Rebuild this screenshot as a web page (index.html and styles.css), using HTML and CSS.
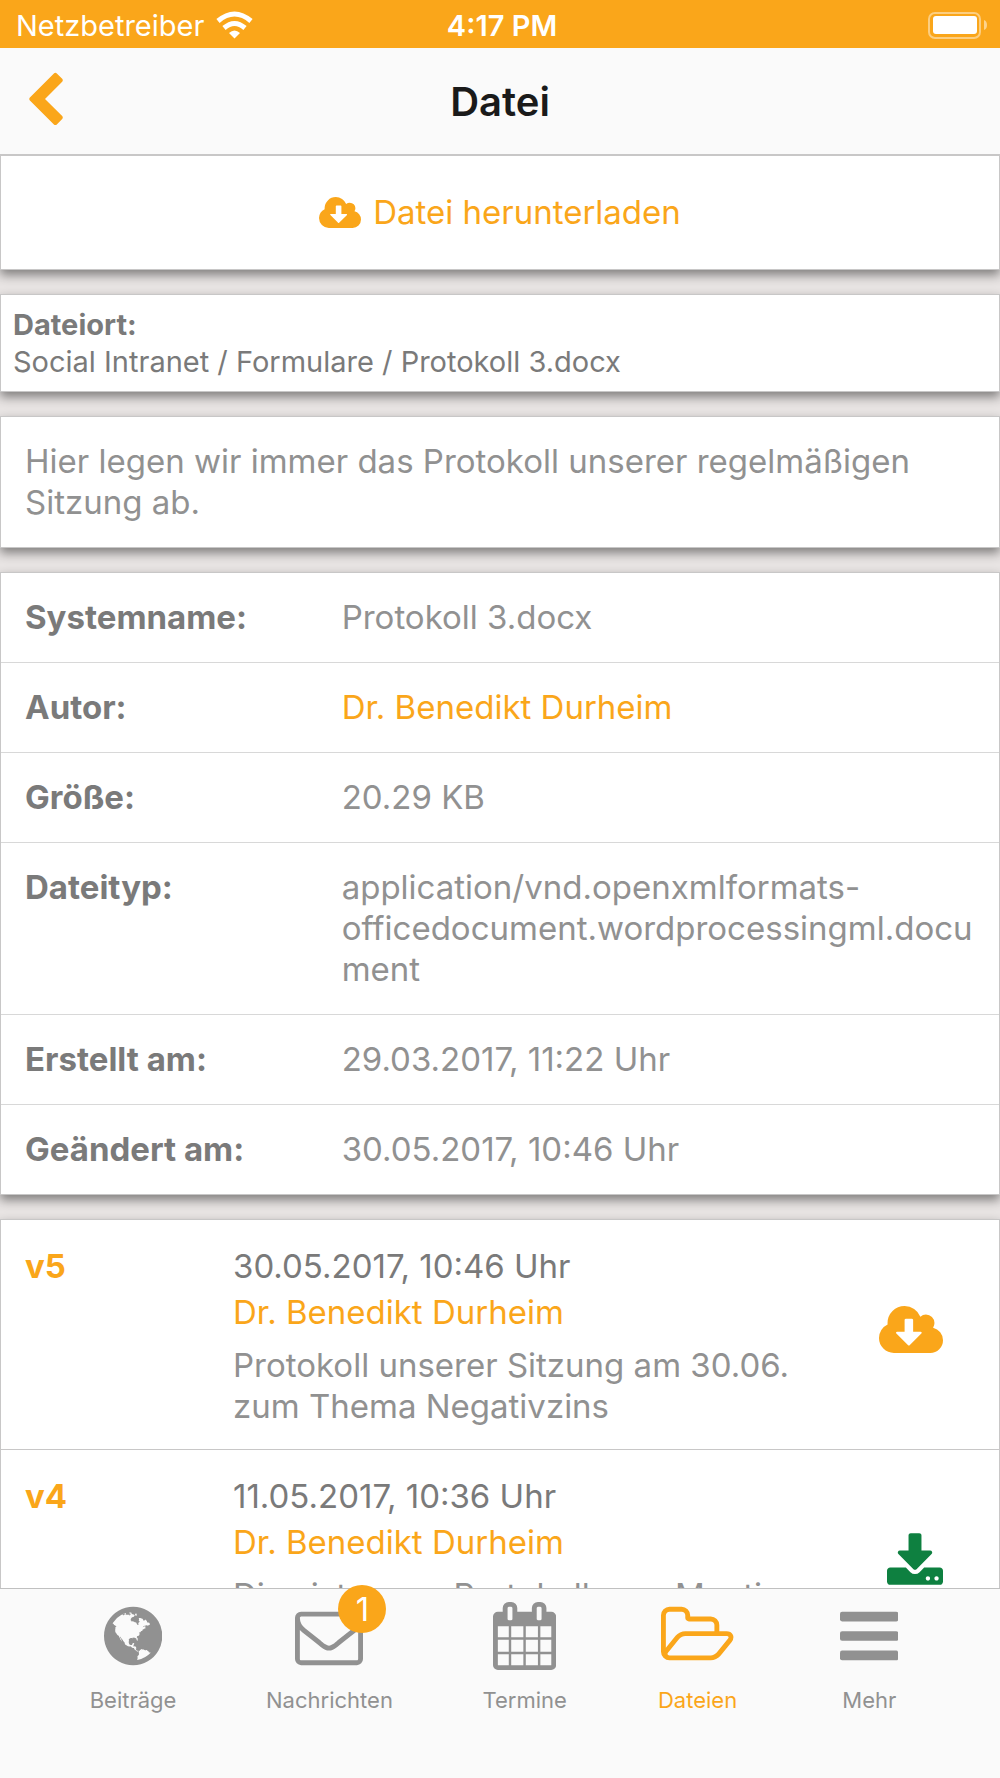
FILE: index.html
```
<!DOCTYPE html>
<html lang="de">
<head>
    <meta charset="UTF-8">
    <meta name="viewport" content="width=device-width, initial-scale=1.0">
    <title>Datei</title>
    <link rel="stylesheet" href="styles.css">
</head>
<body>

<div class="statusbar">
    <div class="carrier">
        <span>Netzbetreiber</span>
        <svg class="wifi" viewBox="0 0 37 28" fill="none" stroke="#fff" stroke-width="5">
            <path class="wave" d="M2 10Q18.500 -4 35 10"/>
            <path class="wave" d="M8 17Q18.500 8 29 17"/>
            <path d="M18.500 27.500L13 22Q18.500 17 24 22Z" fill="#fff" stroke="none"/>
        </svg>
    </div>
    <div class="time">4:17 PM</div>
    <svg class="battery" viewBox="0 0 60 27">
        <rect x="1" y="1" width="51" height="25" rx="6" fill="none" stroke="#fff" stroke-width="2" opacity=".45"/>
        <rect x="5" y="4" width="44" height="18" rx="3" fill="#fff"/>
        <path d="M56 8q3 1 3 5t-3 5z" fill="#fff" opacity=".5"/>
    </svg>
</div>

<header class="header">
    <button type="button" class="back" aria-label="Zurück">
        <svg viewBox="0 0 1792 1792"><path d="M1427 301l-531 531 531 531q19 19 19 45t-19 45l-166 166q-19 19-45 19t-45-19l-742-742q-19-19-19-45t19-45l742-742q19-19 45-19t45 19l166 166q19 19 19 45t-19 45z"/></svg>
    </button>
    <h1>Datei</h1>
</header>

<main class="content">
    <section class="card">
        <button type="button" class="download">
            <svg viewBox="0 128 1920 1408"><path d="M1280 928q0-14-9-23t-23-9h-224v-352q0-13-9.500-22.500t-22.500-9.500h-192q-13 0-22.500 9.500t-9.500 22.500v352h-224q-13 0-22.500 9.500t-9.500 22.500q0 14 9 23l352 352q9 9 23 9t23-9l351-351q10-12 10-24zm640 224q0 159-112.500 271.500t-271.500 112.500h-1088q-185 0-316.500-131.500t-131.500-316.500q0-130 70-240t188-165q-2-30-2-43 0-212 150-362t362-150q156 0 285.500 87t188.500 231q71-62 166-62 106 0 181 75t75 181q0 76-41 138 130 31 213.500 135.500t83.500 238.500z"/></svg>
            Datei herunterladen
        </button>
    </section>

    <section class="card location">
        <strong>Dateiort:</strong>
        <div>Social Intranet / Formulare / Protokoll 3.docx</div>
    </section>

    <section class="card description">
        Hier legen wir immer das Protokoll unserer regelmäßigen Sitzung ab.
    </section>

    <dl class="card details">
        <div class="row">
            <dt>Systemname:</dt>
            <dd>Protokoll 3.docx</dd>
        </div>
        <div class="row">
            <dt>Autor:</dt>
            <dd><a href="#">Dr. Benedikt Durheim</a></dd>
        </div>
        <div class="row">
            <dt>Größe:</dt>
            <dd>20.29 KB</dd>
        </div>
        <div class="row">
            <dt>Dateityp:</dt>
            <dd>application/vnd.openxmlformats-officedocument.wordprocessingml.document</dd>
        </div>
        <div class="row">
            <dt>Erstellt am:</dt>
            <dd>29.03.2017, 11:22 Uhr</dd>
        </div>
        <div class="row">
            <dt>Geändert am:</dt>
            <dd>30.05.2017, 10:46 Uhr</dd>
        </div>
    </dl>

    <section class="card versions">
        <article class="version">
            <div class="number">v5</div>
            <div class="info">
                <div class="date">30.05.2017, 10:46 Uhr</div>
                <a href="#">Dr. Benedikt Durheim</a>
                <p>Protokoll unserer Sitzung am 30.06. zum Thema Negativzins</p>
            </div>
            <button type="button" class="fetch" aria-label="v5 herunterladen">
                <svg class="cloud" viewBox="0 128 1920 1408"><path d="M1280 928q0-14-9-23t-23-9h-224v-352q0-13-9.500-22.500t-22.500-9.500h-192q-13 0-22.500 9.500t-9.500 22.500v352h-224q-13 0-22.500 9.500t-9.500 22.500q0 14 9 23l352 352q9 9 23 9t23-9l351-351q10-12 10-24zm640 224q0 159-112.500 271.500t-271.500 112.500h-1088q-185 0-316.500-131.500t-131.500-316.500q0-130 70-240t188-165q-2-30-2-43 0-212 150-362t362-150q156 0 285.500 87t188.500 231q71-62 166-62 106 0 181 75t75 181q0 76-41 138 130 31 213.500 135.500t83.500 238.500z"/></svg>
            </button>
        </article>
        <article class="version">
            <div class="number">v4</div>
            <div class="info">
                <div class="date">11.05.2017, 10:36 Uhr</div>
                <a href="#">Dr. Benedikt Durheim</a>
                <p>Dies ist unser Protokoll zum Meeting am 11.05.2017</p>
            </div>
            <button type="button" class="fetch" aria-label="v4 öffnen">
                <svg class="saved" viewBox="64 0 1664 1536"><path d="M1344 1344q0-26-19-45t-45-19-45 19-19 45 19 45 45 19 45-19 19-45zm256 0q0-26-19-45t-45-19-45 19-19 45 19 45 45 19 45-19 19-45zm128-224v320q0 40-28 68t-68 28h-1472q-40 0-68-28t-28-68v-320q0-40 28-68t68-28h465l135 136q58 56 136 56t136-56l136-136h464q40 0 68 28t28 68zm-325-569q17 41-14 70l-448 448q-18 19-45 19t-45-19l-448-448q-31-29-14-70 17-39 59-39h256v-448q0-26 19-45t45-19h256q26 0 45 19t19 45v448h256q42 0 59 39z"/></svg>
            </button>
        </article>
    </section>
</main>

<nav class="tabbar">
    <a href="#" class="tab">
        <span class="icon">
            <svg viewBox="128 0 1536 1792"><path d="M896 128q209 0 385.500 103t279.500 279.500 103 385.500-103 385.500-279.500 279.500-385.500 103-385.500-103-279.500-279.500-103-385.500 103-385.500 279.500-279.500 385.500-103zm274 521q-2 1-9.500 9.500t-13.500 9.500q2 0 4.500-5t5-11 3.500-7q6-7 22-15 14-6 52-12 34-8 51 11-2-2 9.500-13t14.500-12q3-2 15-4.500t15-7.500l2-22q-12 1-17.500-7t-6.500-21q0 2-6 8 0-7-4.500-8t-11.500 1-9 1q-10-3-15-7.500t-8-16.500-4-15q-2-5-9.500-11t-9.500-10q-1-2-2.500-5.500t-3-6.500-4-5.500-5.500-2.500-7 5-7.500 10-4.500 5q-3-2-6-1.500t-4.500 1-4.500 3-5 3.500q-3 2-8.500 3t-8.500 2q15-5-1-11-10-4-16-3 9-4 7.500-12t-8.500-14h5q-1-4-8.500-8.500t-17.500-8.500-13-6q-8-5-34-9.500t-33-.5q-5 6-4.500 10.500t4 14 3.500 12.500q1 6-5.500 13t-6.500 12q0 7 14 15.500t10 21.500q-3 8-16 16t-16 12q-5 8-1.500 18.500t10.500 16.500q2 2 1.500 4t-3.500 4.500-5.500 4-6.500 3.500l-3 2q-11 5-20.500-6t-13.500-26q-7-25-16-30-23-8-29 1-5-13-41-26-25-9-58-4 6-1 0-15-7-15-19-12 3-6 4-17.500t1-13.500q3-13 12-23 1-1 7-8.500t9.500-13.500.5-6q35 4 50-11 5-5 11.500-17t10.500-17q9-6 14-5.500t14.500 5.500 14.500 5q14 1 15.500-11t-7.500-20q12 1 3-17-4-7-8-9-12-4-27 5-8 4 2 8-1-1-9.500 10.500t-16.500 17.500-16-5q-1-1-5.500-13.500t-9.500-13.500q-8 0-16 15 3-8-11-15t-24-8q19-12-8-27-7-4-20.500-5t-19.500 4q-5 7-5.500 11.500t5 8 10.500 5.500 11.500 4 8.500 3q14 10 8 14-2 1-8.500 3.500t-11.500 4.500-6 4q-3 4 0 14t-2 14q-5-5-9-17.500t-7-16.500q7 9-25 6l-10-1q-4 0-16 2t-20.500 1-13.500-8q-4-8 0-20 1-4 4-2-4-3-11-9.500t-10-8.500q-46 15-94 41 6 1 12-1 5-2 13-6.500t10-5.500q34-14 42-7l5-5q14 16 20 25-7-4-30-1-20 6-22 12 7 12 5 18-4-3-11.500-10t-14.500-11-15-5q-16 0-22 1-146 80-235 222 7 7 12 8 4 1 5 9t2.500 11 11.500-3q9 8 3 19 1-1 44 27 19 17 21 21 3 11-10 18-1-2-9-9t-9-4q-3 5 .5 18.500t10.500 12.500q-7 0-9.500 16t-2.500 35.500-1 23.500l2 1q-3 12 5.500 34.500t21.500 19.500q-13 3 20 43 6 8 8 9 3 2 12 7.500t15 10 10 10.500q4 5 10 22.500t14 23.500q-2 6 9.500 20t10.500 23q-1 0-2.500 1t-2.500 1q3 7 15.500 14t15.500 13q1 3 2 10t3 11 8 2q2-20-24-62-15-25-17-29-3-5-5.500-15.500t-4.500-14.500q2 0 6 1.500t8.500 3.500 7.500 4 2 3q-3 7 2 17.500t12 18.500 17 19 12 13q6 6 14 19.500t0 13.500q9 0 20 10t17 20q5 8 8 26t5 24q2 7 8.500 13.500t12.500 9.500l16 8 13 7q5 2 18.500 10.500t21.500 11.500q10 4 16 4t14.500-2.500 13.500-3.500q15-2 29 15t21 21q36 19 55 11-2 1 .5 7.500t8 15.500 9 14.500 5.500 8.500q5 6 18 15t18 15q6-4 7-9-3 8 7 20t18 10q14-3 14-32-31 15-49-18 0-1-2.500-5.500t-4-8.500-2.500-8.500 0-7.500 5-3q9 0 10-3.500t-2-12.500-4-13q-1-8-11-20t-12-15q-5 9-16 8t-16-9q0 1-1.500 5.500t-1.500 6.500q-13 0-15-1 1-3 2.500-17.500t3.500-22.500q1-4 5.500-12t7.500-14.500 4-12.500-4.500-9.500-17.500-2.500q-19 1-26 20-1 3-3 10.500t-5 11.500-9 7q-7 3-24 2t-24-5q-13-8-22.500-29t-9.500-37q0-10 2.500-26.500t3-25-5.500-24.500q3-2 9-9.500t10-10.500q2-1 4.500-1.500t4.500 0 4-1.500 3-6q-1-1-4-3-3-3-4-3 7 3 28.500-1.500t27.500 1.500q15 11 22-2 0-1-2.500-9.500t-.5-13.500q5 27 29 9 3 3 15.500 5t17.500 5q3 2 7 5.500t5.500 4.500 5-.5 8.500-6.500q10 14 12 24 11 40 19 44 7 3 11 2t4.500-9.500 0-14-1.500-12.500l-1-8v-18l-1-8q-15-3-18.500-12t1.500-18.500 15-18.500q1-1 8-3.500t15.500-6.500 12.500-8q21-19 15-35 7 0 11-9-1 0-5-3t-7.500-5-4.500-2q9-5 2-16 5-3 7.500-11t7.500-10q9 12 21 2 7-8 1-16 5-7 20.500-10.500t18.500-9.500q7 2 8-2t1-12 3-12q4-5 15-9t13-5l17-11q3-4 0-4 18 2 31-11 10-11-6-20 3-6-3-9.500t-15-5.500q3-1 11.500-.5t10.500-1.500q15-10-7-16-17-5-43 12zm-163 877q206-36 351-189-3-3-12.500-4.500t-12.500-3.500q-18-7-24-8 1-7-2.500-13t-8-9-12.500-8-11-7q-2-2-7-6t-7-5.500-7.500-4.500-8.500-2-10 1l-3 1q-3 1-5.500 2.500t-5.500 3-4 3 0 2.500q-21-17-36-22-5-1-11-5.500t-10.500-7-10-1.500-11.500 7q-5 5-6 15t-2 13q-7-5 0-17.500t2-18.500q-3-6-10.500-4.500t-12 4.500-11.500 8.500-9 6.500-8.500 5.500-8.500 7.500q-3 4-6 12t-5 11q-2-4-11.500-6.500t-9.500-5.500q2 10 4 35t5 38q7 31-12 48-27 25-29 40-4 22 12 26 0 7-8 20.500t-7 21.500q0 6 2 16z"/></svg>
        </span>
        Beiträge
    </a>
    <a href="#" class="tab">
        <span class="icon">
            <svg viewBox="0 0 1792 1792"><path d="M1664 1504v-768q-32 36-69 66-268 206-426 338-51 43-83 67t-86.500 48.500-102.500 24.500h-2q-48 0-102.500-24.500t-86.500-48.500-83-67q-158-132-426-338-37-30-69-66v768q0 13 9.500 22.500t22.500 9.500h1472q13 0 22.500-9.500t9.500-22.500zm0-1051v-24.500l-.5-13-3-12.500-5.500-9-9-7.500-14-2.500h-1472q-13 0-22.500 9.500t-9.500 22.500q0 168 147 284 193 152 401 317 6 5 35 29.500t46 37.500 44.500 31.500 50.500 27.500 43 9h2q20 0 43-9t50.500-27.500 44.500-31.500 46-37.500 35-29.500q208-165 401-317 54-43 100.500-115.500t46.500-131.500zm128-37v1088q0 66-47 113t-113 47h-1472q-66 0-113-47t-47-113v-1088q0-66 47-113t113-47h1472q66 0 113 47t47 113z"/></svg>
            <span class="badge">1</span>
        </span>
        Nachrichten
    </a>
    <a href="#" class="tab">
        <span class="icon">
            <svg viewBox="64 0 1664 1792"><path d="M192 1664h288v-288h-288v288zm352 0h320v-288h-320v288zm-352-352h288v-320h-288v320zm352 0h320v-320h-320v320zm-352-384h288v-288h-288v288zm736 736h320v-288h-320v288zm-384-736h320v-288h-320v288zm768 736h288v-288h-288v288zm-384-352h320v-320h-320v320zm-352-864v-288q0-13-9.500-22.500t-22.500-9.500h-64q-13 0-22.500 9.500t-9.500 22.500v288q0 13 9.500 22.500t22.500 9.500h64q13 0 22.500-9.500t9.500-22.500zm736 864h288v-320h-288v320zm-384-384h320v-288h-320v288zm384 0h288v-288h-288v288zm32-480v-288q0-13-9.500-22.500t-22.500-9.500h-64q-13 0-22.500 9.500t-9.500 22.500v288q0 13 9.500 22.500t22.500 9.500h64q13 0 22.500-9.500t9.500-22.500zm384-64v1280q0 52-38 90t-90 38h-1408q-52 0-90-38t-38-90v-1280q0-52 38-90t90-38h128v-96q0-66 47-113t113-47h64q66 0 113 47t47 113v96h384v-96q0-66 47-113t113-47h64q66 0 113 47t47 113v96h128q52 0 90 38t38 90z"/></svg>
        </span>
        Termine
    </a>
    <a href="#" class="tab active">
        <span class="icon">
            <svg viewBox="64 0 1909 1792"><path d="M1845 931q0-35-53-35h-1088q-40 0-85.500 21.500t-71.500 52.500l-294 363q-18 24-18 40 0 35 53 35h1088q40 0 86-22t71-53l294-363q18-22 18-39zm-1141-163h768v-160q0-40-28-68t-68-28h-576q-40 0-68-28t-28-68v-64q0-40-28-68t-68-28h-320q-40 0-68 28t-28 68v853l256-315q44-53 116-87.500t140-34.500zm1269 163q0 62-46 120l-295 363q-43 53-116 87.500t-140 34.500h-1088q-92 0-158-66t-66-158v-960q0-92 66-158t158-66h320q92 0 158 66t66 158v32h544q92 0 158 66t66 158v160h192q54 0 99 24.500t67 70.500q15 32 15 68z"/></svg>
        </span>
        Dateien
    </a>
    <a href="#" class="tab">
        <span class="icon">
            <svg viewBox="128 0 1536 1792"><rect x="128" y="256" width="1536" height="256" rx="56"/><rect x="128" y="768" width="1536" height="256" rx="56"/><rect x="128" y="1280" width="1536" height="256" rx="56"/></svg>
        </span>
        Mehr
    </a>
</nav>

</body>
</html>
```
FILE: styles.css
```
* {
    box-sizing: border-box;
}
body {
    display: flex;
    flex-direction: column;
    height: 100vh;
    margin: 0;
    background-color: #e8e4e3;
    color: #919191;
    font-family: Inter, "Liberation Sans", sans-serif;
    font-size: 33px;
    line-height: 41px;
}
svg {
    display: block;
    fill: currentColor;
}
a {
    color: #faa61a;
    text-decoration: none;
}
button {
    padding: 0;
    border: none;
    background: none;
    color: #faa61a;
    font: inherit;
    cursor: pointer;
}

/* Status bar */
.statusbar {
    display: grid;
    grid-template-columns: 1fr auto 1fr;
    align-items: center;
    flex: none;
    height: 48px;
    padding: 2px 12px 0 16px;
    background-color: #faa61a;
    color: white;
    font-size: 29px;
}
.carrier {
    display: flex;
    align-items: center;
    gap: 12px;
}
.wifi {
    width: 37px;
    height: 28px;
}
.wave {
    fill: none;
}
.time {
    font-weight: 600;
}
.battery {
    width: 60px;
    height: 27px;
    justify-self: end;
}

/* Header */
.header {
    display: grid;
    grid-template-columns: 1fr auto 1fr;
    align-items: center;
    flex: none;
    height: 107px;
    padding: 0 16px;
    border-bottom: 1px solid #c8c7c7;
    background-color: #fafafa;
}
.header h1 {
    margin: 0;
    color: #1a1a1a;
    font-size: 40px;
    font-weight: 600;
}
.back {
    justify-self: start;
}
.back svg {
    width: 58px;
    height: 58px;
}

/* Cards */
.content {
    display: flex;
    flex-direction: column;
    flex: 1;
    gap: 24px;
    min-height: 0;
    overflow: hidden;
}
.card {
    flex: none;
    margin: 0;
    border: 1px solid #c8c7c7;
    background-color: white;
    box-shadow: 0 5px 10px rgba(0, 0, 0, 0.45);
}
.download {
    display: flex;
    align-items: center;
    justify-content: center;
    gap: 12px;
    width: 100%;
    height: 113px;
}
.download svg {
    width: 42px;
    height: 31px;
}
.location {
    padding: 11px 12px;
    color: #7a7a7a;
    font-size: 29px;
    line-height: 37px;
}
.description {
    padding: 24px;
}

/* File details */
.row {
    display: grid;
    grid-template-columns: 1fr 2fr;
    padding: 24px;
    border-bottom: 1px solid #d8d8d8;
}
.row:last-child {
    border-bottom: none;
}
.row dt {
    color: #7a7a7a;
    font-weight: bold;
}
.row dd {
    margin: 0;
    overflow-wrap: anywhere;
}

/* Versions */
.version {
    display: grid;
    grid-template-columns: 208px 1fr 64px;
    padding: 23px 56px 22px 24px;
    border-bottom: 1px solid #c8c7c7;
}
.number {
    color: #faa61a;
    font-weight: bold;
    line-height: 46px;
}
.info {
    line-height: 46px;
    padding-right: 40px;
}
.date {
    color: #7a7a7a;
}
.info p {
    margin: 10px 0 0;
    line-height: 41px;
}
.fetch {
    align-self: center;
    justify-self: end;
    margin-bottom: 12px;
}
.cloud {
    width: 64px;
    height: 47px;
}
.saved {
    width: 56px;
    height: 52px;
    color: #0e8040;
}

/* Tab bar */
.tabbar {
    display: flex;
    justify-content: space-evenly;
    flex: none;
    height: 190px;
    padding-top: 13px;
    border-top: 1px solid #c0c0c0;
    background-color: #fafafa;
    z-index: 1;
}
.tab {
    display: flex;
    flex-direction: column;
    align-items: center;
    gap: 16px;
    min-width: 82px;
    color: #919191;
    font-size: 22px;
    line-height: 28px;
}
.tab.active {
    color: #faa61a;
}
.icon {
    position: relative;
}
.icon svg {
    width: auto;
    height: 68px;
}
.badge {
    position: absolute;
    top: -17px;
    left: 43px;
    width: 48px;
    height: 48px;
    border-radius: 50%;
    background-color: #faa61a;
    color: white;
    line-height: 48px;
    font-size: 33px;
    text-align: center;
}
```
